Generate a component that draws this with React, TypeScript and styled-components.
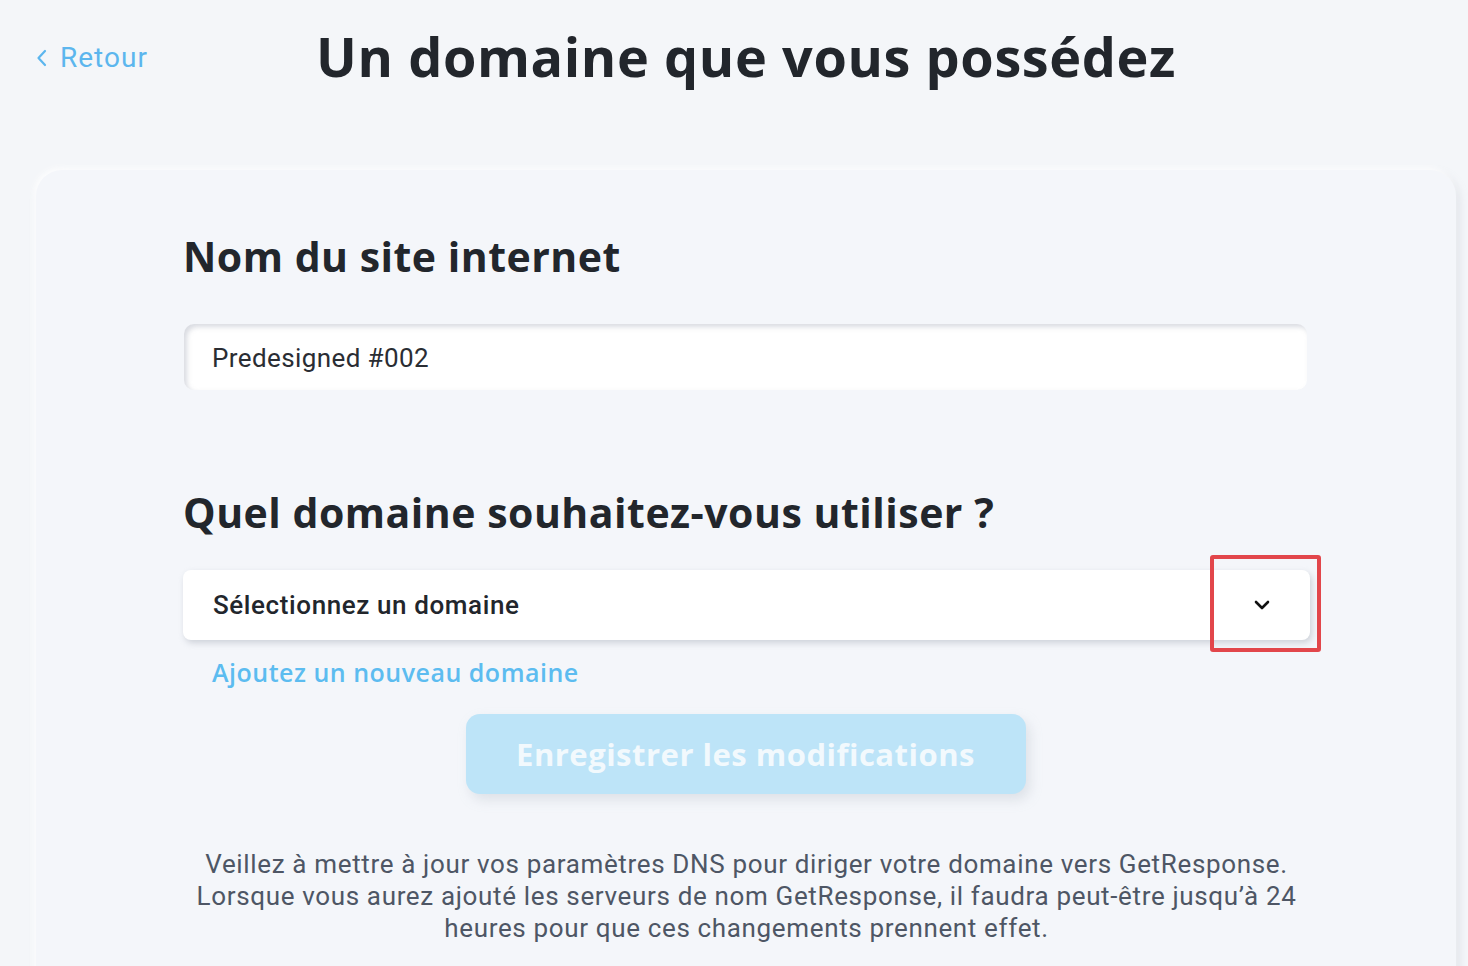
import React from "react";
import styled, { createGlobalStyle } from "styled-components";

const GlobalStyle = createGlobalStyle`
  html, body { margin: 0; padding: 0; background: #f4f6f9; }
  body { font-family: Roboto, "Liberation Sans", sans-serif; overflow: hidden; }
  * { box-sizing: border-box; }
`;

const Page = styled.div`
  width: 1468px;
  height: 966px;
  overflow: hidden;
  padding: 0 12px 0 36px;
  background: #f4f6f9;
`;

const Header = styled.header`
  position: relative;
  height: 170px;
  display: flex;
  justify-content: center;
  padding-top: 20px;
`;

const BackLink = styled.a`
  position: absolute;
  left: 0;
  top: 41px;
  display: flex;
  align-items: center;
  gap: 12px;
  color: #5cb6ee;
  font-family: Roboto, sans-serif;
  font-size: 28px;
  letter-spacing: 1px;
  text-decoration: none;
`;

const Title = styled.h1`
  margin: 0;
  font-family: "Open Sans", "Noto Sans", sans-serif;
  font-weight: 700;
  font-size: 54px;
  line-height: 72px;
  letter-spacing: 0.6px;
  color: #22262c;
`;

const Card = styled.section`
  background: #f4f6fa;
  border-radius: 26px 26px 0 0;
  box-shadow: -2px -2px 6px rgba(255, 255, 255, 0.9), 3px 4px 8px rgba(180, 186, 198, 0.35);
  height: 820px;
  padding: 56px 146px 0 147px;
  display: flex;
  flex-direction: column;
`;

const SectionTitle = styled.h2<{ $top?: number }>`
  margin: ${(p) => p.$top ?? 0}px 0 0;
  font-family: "Open Sans", "Noto Sans", sans-serif;
  font-weight: 700;
  font-size: 41px;
  line-height: 60px;
  letter-spacing: 0.5px;
  color: #22262c;
`;

const TextInput = styled.div`
  margin-top: 38px;
  height: 66px;
  margin-left: 1px;
  margin-right: 3px;
  background: #fff;
  border-radius: 10px;
  box-shadow: inset 3px 3px 5px rgba(170, 176, 188, 0.45);
  display: flex;
  align-items: center;
  padding-left: 28px;
  padding-top: 2px;
  font-family: Roboto, sans-serif;
  font-size: 26px;
  letter-spacing: 0.4px;
  color: #2a2d33;
`;

const SelectRow = styled.div`
  position: relative;
  margin-top: 28px;
  height: 70px;
  background: #fff;
  border-radius: 8px;
  box-shadow: 2px 3px 6px rgba(160, 166, 178, 0.45);
  display: flex;
  align-items: center;
  justify-content: space-between;
  padding: 0 40px 0 30px;
  font-family: Roboto, sans-serif;
  font-weight: 500;
  font-size: 26px;
  letter-spacing: 0.6px;
  color: #22262c;
`;

const Highlight = styled.div`
  position: absolute;
  right: -11px;
  top: -15px;
  width: 111px;
  height: 97px;
  border: 4px solid #e2464b;
  border-radius: 3px;
`;

const AddLink = styled.a`
  margin-top: 14px;
  padding-left: 29px;
  font-family: "Open Sans", "Noto Sans", sans-serif;
  font-weight: 600;
  font-size: 25px;
  line-height: 36px;
  letter-spacing: 0.5px;
  color: #5cbcf0;
  text-decoration: none;
`;

const SaveButton = styled.button`
  align-self: center;
  margin-top: 24px;
  margin-left: -2px;
  width: 560px;
  height: 80px;
  border: none;
  border-radius: 14px;
  background: #bde4f8;
  box-shadow: 4px 6px 12px rgba(180, 188, 200, 0.35);
  color: #f2f9fd;
  font-family: "Open Sans", "Noto Sans", sans-serif;
  font-weight: 700;
  font-size: 31px;
  letter-spacing: 0.5px;
`;

const Note = styled.p`
  margin: 54px 0 0;
  text-align: center;
  font-family: Roboto, sans-serif;
  font-size: 26px;
  line-height: 32px;
  letter-spacing: 0.65px;
  color: #4e5665;
`;

export default function App() {
  return (
    <Page>
      <GlobalStyle />
      <Header>
        <BackLink href="#">
          <svg width="12" height="20" viewBox="0 0 12 20" fill="none">
            <path d="M9 3L2.5 10L9 17" stroke="#5cb6ee" strokeWidth="2.2" strokeLinecap="round" strokeLinejoin="round" />
          </svg>
          Retour
        </BackLink>
        <Title>Un domaine que vous possédez</Title>
      </Header>
      <Card>
        <SectionTitle>Nom du site internet</SectionTitle>
        <TextInput>Predesigned #002</TextInput>
        <SectionTitle $top={92}>Quel domaine souhaitez-vous utiliser ?</SectionTitle>
        <SelectRow>
          <span>Sélectionnez un domaine</span>
          <svg width="16" height="10" viewBox="0 0 16 10" fill="none">
            <path d="M2 2L8 8L14 2" stroke="#111" strokeWidth="2.6" strokeLinecap="round" strokeLinejoin="round" />
          </svg>
          <Highlight />
        </SelectRow>
        <AddLink href="#">Ajoutez un nouveau domaine</AddLink>
        <SaveButton>Enregistrer les modifications</SaveButton>
        <Note>
          Veillez à mettre à jour vos paramètres DNS pour diriger votre domaine vers GetResponse.
          <br />
          Lorsque vous aurez ajouté les serveurs de nom GetResponse, il faudra peut-être jusqu’à 24
          <br />
          heures pour que ces changements prennent effet.
        </Note>
      </Card>
    </Page>
  );
}
